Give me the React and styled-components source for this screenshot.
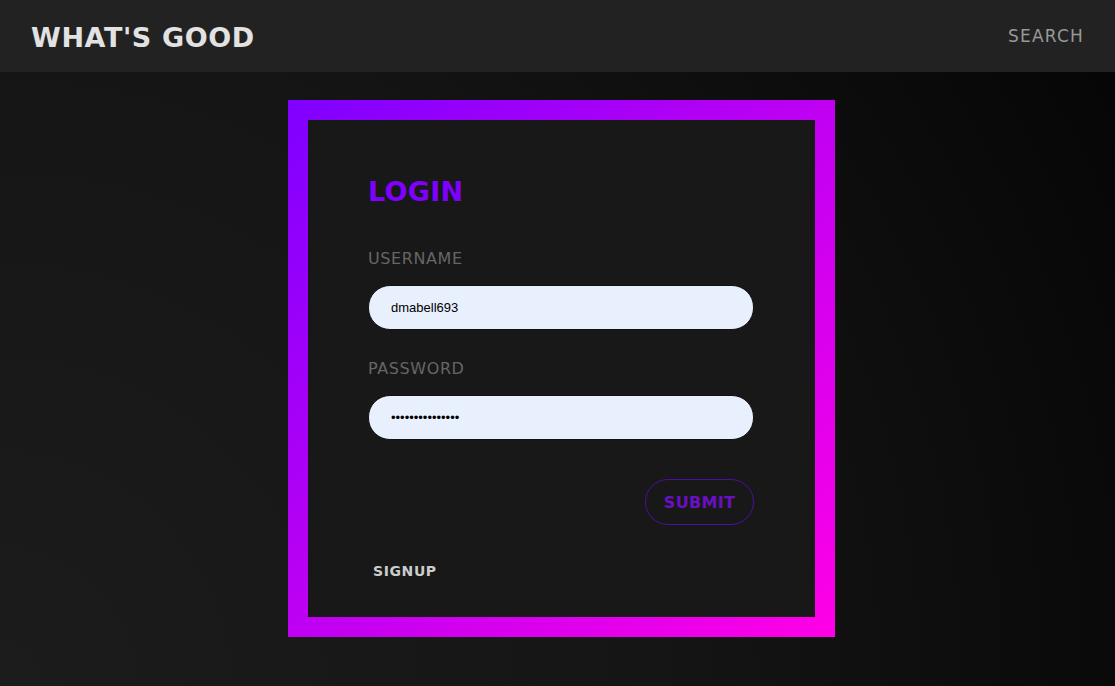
import React from "react";
import styled, { createGlobalStyle } from "styled-components";

const GlobalStyle = createGlobalStyle`
  html, body {
    margin: 0;
    padding: 0;
  }
  body {
    font-family: "DejaVu Sans", "Noto Sans", sans-serif;
    background: #111;
  }
`;

const Page = styled.div`
  min-height: 686px;
  display: flex;
  flex-direction: column;
  background: radial-gradient(circle at 0% 100%, #1c1c1c 0%, #151515 50%, #050505 100%);
`;

const Header = styled.header`
  height: 72px;
  background: #222;
  display: flex;
  align-items: center;
  justify-content: space-between;
  padding: 0 31px 0 31px;
  box-sizing: border-box;
`;

const Logo = styled.div`
  color: #e2e2e2;
  font-size: 27px;
  font-weight: 800;
  letter-spacing: 0.6px;
  margin-top: 2px;
`;

const NavLink = styled.div`
  color: #999;
  font-size: 17px;
  letter-spacing: 1.2px;
  margin-top: 0;
`;

const Main = styled.main`
  display: flex;
  justify-content: center;
  padding-top: 28px;
  padding-left: 8px;
`;

const Frame = styled.div`
  width: 547px;
  height: 537px;
  box-sizing: border-box;
  padding: 20px;
  background: linear-gradient(135deg, #7f00ff 0%, #ff00e6 100%);
`;

const Card = styled.div`
  height: 100%;
  background: #181818;
  box-sizing: border-box;
  padding: 56px 61px 0 60px;
  display: flex;
  flex-direction: column;
`;

const Title = styled.h1`
  margin: 0 0 42px;
  color: #8000ff;
  font-size: 27px;
  font-weight: 800;
  letter-spacing: 0.3px;
`;

const Label = styled.label`
  display: block;
  color: #666;
  font-size: 16px;
  letter-spacing: 0.6px;
  margin-bottom: 17px;
`;

const Input = styled.input`
  width: 100%;
  height: 45px;
  box-sizing: border-box;
  border: 1px solid #111;
  border-radius: 22px;
  background: #e8f0fe;
  padding: 0 22px;
  font-family: "Liberation Sans", Arial, sans-serif;
  font-size: 13px;
  color: #000;
  outline: none;
  margin-bottom: ${(p) => p.$gap}px;
`;

const Actions = styled.div`
  display: flex;
  justify-content: flex-end;
  margin-top: 39px;
`;

const SubmitButton = styled.button`
  height: 46px;
  width: 109px;
  border: 1px solid #4d0fa3;
  border-radius: 23px;
  background: transparent;
  color: #6a10c4;
  font-family: "DejaVu Sans", sans-serif;
  font-size: 16px;
  font-weight: 800;
  letter-spacing: 0.3px;
`;

const SignupLink = styled.div`
  color: #ccc;
  font-size: 14px;
  font-weight: 700;
  letter-spacing: 0.6px;
  margin: 38px 0 0 5px;
`;

export default function App() {
  return (
    <>
      <GlobalStyle />
      <Page>
        <Header>
          <Logo>WHAT'S GOOD</Logo>
          <NavLink>SEARCH</NavLink>
        </Header>
        <Main>
          <Frame>
            <Card>
              <Title>LOGIN</Title>
              <Label>USERNAME</Label>
              <Input type="text" defaultValue="dmabell693" $gap={29} />
              <Label>PASSWORD</Label>
              <Input type="password" defaultValue="123456789012345" $gap={0} />
              <Actions>
                <SubmitButton>SUBMIT</SubmitButton>
              </Actions>
              <SignupLink>SIGNUP</SignupLink>
            </Card>
          </Frame>
        </Main>
      </Page>
    </>
  );
}
